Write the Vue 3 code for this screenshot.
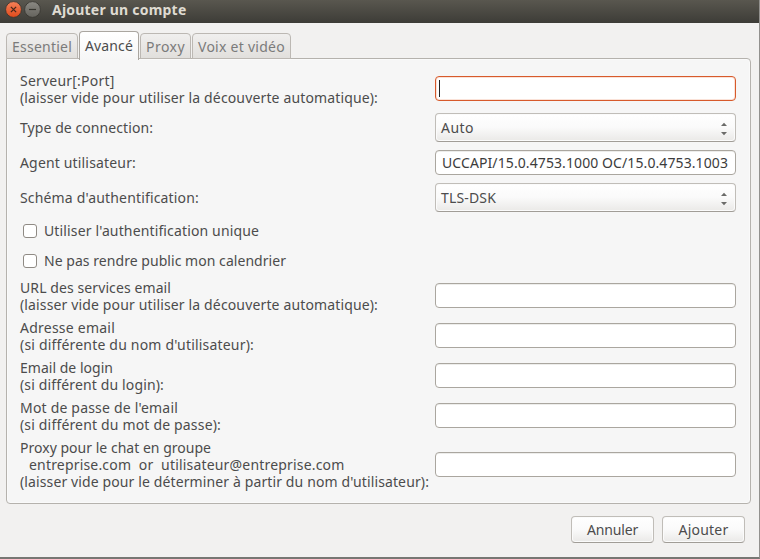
<script setup>
import { ref } from 'vue'

const tabs = [
  { name: 'Essentiel', width: 60, cls: 'tab-a' },
  { name: 'Avancé', width: 48, cls: 'tab-b' },
  { name: 'Proxy', width: 39, cls: 'tab-c' },
  { name: 'Voix et vidéo', width: 87, cls: 'tab-d' },
]
const active = ref('Avancé')
const auto = ['(laisser vide pour utiliser la découverte automatique):', 358]

const rows = [
  { type: 'input', focus: true, lines: [['Serveur[:Port]', 94.5], auto] },
  { type: 'combo', lines: [['Type de connection:', 133]], value: 'Auto', width: 33 },
  { type: 'input', lines: [['Agent utilisateur:', 116]], value: 'UCCAPI/15.0.4753.1000 OC/15.0.4753.1003', width: 286 },
  { type: 'combo', lines: [["Schéma d'authentification:", 179]], value: 'TLS-DSK', width: 55 },
  { type: 'check', lines: [["Utiliser l'authentification unique", 215]] },
  { type: 'check', lines: [['Ne pas rendre public mon calendrier', 242]] },
  { type: 'input', lines: [['URL des services email', 151], auto] },
  { type: 'input', lines: [['Adresse email', 95], ["(si différente du nom d'utilisateur):", 234]] },
  { type: 'input', lines: [['Email de login', 93], ['(si différent du login):', 144]] },
  { type: 'input', lines: [["Mot de passe de l'email", 158], ['(si différent du mot de passe):', 201]] },
  {
    type: 'input',
    lines: [
      ['Proxy pour le chat en groupe', 191],
      ['entreprise.com  or  utilisateur@entreprise.com', 315.5, true],
      ["(laisser vide pour le déterminer à partir du nom d'utilisateur):", 409],
    ],
  },
]

// Spreads letter spacing so that a label takes the given width.
const vFit = {
  mounted(el, { value }) {
    const natural = el.getBoundingClientRect().width
    el.style.letterSpacing = (value - natural) / el.textContent.length + 'px'
  },
}
</script>

<template>
  <div class="window">
    <header class="titlebar">
      <svg class="controls" width="42" height="23" viewBox="0 0 42 23">
        <defs>
          <linearGradient id="close" x1="0" y1="0" x2="0" y2="1">
            <stop offset="0" stop-color="#f58159" />
            <stop offset="1" stop-color="#df4a1b" />
          </linearGradient>
          <linearGradient id="mini" x1="0" y1="0" x2="0" y2="1">
            <stop offset="0" stop-color="#8b8983" />
            <stop offset="1" stop-color="#64635d" />
          </linearGradient>
        </defs>
        <circle cx="13.5" cy="9.5" r="7.9" fill="url(#close)" stroke="#35342f" stroke-width=".8" />
        <path d="M10.9 6.9l5.2 5.2M16.1 6.9l-5.2 5.2" stroke="#46271b" stroke-width="1.3" />
        <circle cx="32.5" cy="9.5" r="7.9" fill="url(#mini)" stroke="#35342f" stroke-width=".8" />
        <path d="M29 9.5h7" stroke="#36352f" stroke-width="1.2" />
      </svg>
      <h1 class="title"><span v-fit="134.5">Ajouter un compte</span></h1>
    </header>

    <main class="body">
      <nav class="tabs">
        <button
          v-for="tab in tabs"
          :key="tab.name"
          class="tab"
          :class="[tab.cls, { active: active === tab.name }]"
          @click="active = tab.name"
        >
          <span v-fit="tab.width">{{ tab.name }}</span>
        </button>
      </nav>

      <section class="panel">
        <div v-for="(row, i) in rows" :key="i" class="row" :class="[row.type, 'n' + row.lines.length]">
          <span v-if="row.type === 'check'" class="box"></span>
          <div class="label">
            <div v-for="(line, j) in row.lines" :key="j" class="line" :class="{ indent: line[2] }">
              <span v-fit="line[1]">{{ line[0] }}</span>
            </div>
          </div>
          <div v-if="row.type === 'input'" class="field" :class="{ focus: row.focus }">
            <i v-if="row.focus" class="caret"></i>
            <span v-if="row.value" v-fit="row.width">{{ row.value }}</span>
          </div>
          <div v-if="row.type === 'combo'" class="select">
            <span v-fit="row.width">{{ row.value }}</span>
            <svg width="6" height="14" viewBox="0 0 6 14">
              <path d="M0 4L3 0.8L6 4ZM0 10L3 13.2L6 10Z" fill="#6b6b69" />
            </svg>
          </div>
        </div>
      </section>

      <footer class="actions">
        <button class="push"><span v-fit="51">Annuler</span></button>
        <button class="push"><span v-fit="50">Ajouter</span></button>
      </footer>
    </main>
  </div>
</template>

<style>
body {
  margin: 0;
  overflow: hidden;
}
</style>

<style scoped>
.window {
  box-sizing: border-box;
  width: 760px;
  height: 559px;
  display: flex;
  flex-direction: column;
  background: #f2f1f0;
  border-right: 1px solid #92918e;
  border-bottom: 2px solid #777773;
  font-family: 'Noto Sans', 'Open Sans', sans-serif;
  font-size: 14px;
  line-height: 17px;
  color: #4c4c4c;
}
span {
  display: inline-block;
  vertical-align: top;
  white-space: pre;
}
.titlebar {
  height: 23px;
  flex: none;
  display: flex;
  background: linear-gradient(#59574f, #3d3c37);
}
.title {
  margin: 1px 0 0 10px;
  font-size: 14px;
  line-height: 18px;
  font-weight: 700;
  color: #dfdbd2;
}
.body {
  padding: 8px 8px 0 6px;
}
.tabs {
  display: flex;
  align-items: flex-end;
  height: 29px;
  position: relative;
  z-index: 1;
  margin-bottom: -2px;
}
button {
  font: inherit;
  color: inherit;
  box-sizing: border-box;
  padding: 0;
}
.tab {
  height: 26px;
  margin: 0 1px 1px 0;
  padding: 1px 0 0 5px;
  text-align: left;
  color: #7b7b7b;
  border: 1px solid #bcb8b3;
  border-radius: 4px 4px 0 0;
  background: linear-gradient(#f0efee, #e1dfdc);
}
.tab-a { width: 72px; }
.tab-b { width: 60px; }
.tab-c { width: 51px; }
.tab-d { width: 99px; }
.tab.active {
  height: 29px;
  margin-bottom: 0;
  padding-bottom: 3px;
  color: #4c4c4c;
  border-color: #aaa6a0;
  border-bottom: 0;
  background: linear-gradient(#ffffff, #f6f6f6);
}
.panel {
  box-sizing: border-box;
  width: 745px;
  height: 446px;
  padding: 13px 14px 0 13px;
  border: 1px solid #b5b2ad;
  border-radius: 0 4px 4px 4px;
  background: #f6f6f6;
  box-shadow: inset 0 0 0 1px #fafafa;
  display: grid;
  grid-template-rows: 34px 31px 27px 31px 24px 24px 34px 34px 34px 34px 51px;
  row-gap: 6px;
}
.row {
  display: grid;
  grid-template-columns: 415px 301px;
  align-items: center;
}
.row.n2,
.row.n3 {
  align-items: start;
}
.row.check {
  display: flex;
}
.check .label {
  padding-bottom: 1px;
}
.line.indent {
  padding-left: 9px;
}
.box {
  box-sizing: border-box;
  width: 14px;
  height: 14px;
  margin: 0 7px 0 3px;
  border: 1px solid #8f8a84;
  border-radius: 3px;
  background: #fff;
}
.field {
  box-sizing: border-box;
  height: 25px;
  display: flex;
  align-items: center;
  padding-left: 6px;
  border: 1px solid #aaa69f;
  border-radius: 4px;
  background: #fff;
  color: #3c3c3c;
  box-shadow: inset 0 1px 0 #ededeb;
}
.n2 .field {
  margin-top: 4px;
}
.n3 .field {
  margin-top: 13px;
}
.field.focus {
  padding-left: 3px;
  border-color: #d75a2b;
  box-shadow: inset 0 0 0 1px #fae2d8;
}
.caret {
  width: 1px;
  height: 17px;
  background: #222;
}
.select {
  box-sizing: border-box;
  height: 29px;
  display: flex;
  align-items: center;
  justify-content: space-between;
  padding: 0 8px 0 5px;
  border: 1px solid #c0bdb8;
  border-bottom-color: #a19d97;
  border-radius: 4px;
  background: linear-gradient(#ffffff, #fafafa 50%, #eae9e7);
  box-shadow: inset 0 0 0 1px #fbfbfb;
}
.select svg {
  margin-top: 3px;
}
.actions {
  display: flex;
  justify-content: flex-end;
  gap: 8px;
  padding: 12px 6px 0 0;
}
.push {
  width: 83px;
  height: 27px;
  border: 1px solid #c0bdb8;
  border-bottom-color: #a19d97;
  border-radius: 4px;
  background: linear-gradient(#ffffff, #fafafa 50%, #eae9e7);
  box-shadow: inset 0 0 0 1px #fbfbfb;
}
</style>
